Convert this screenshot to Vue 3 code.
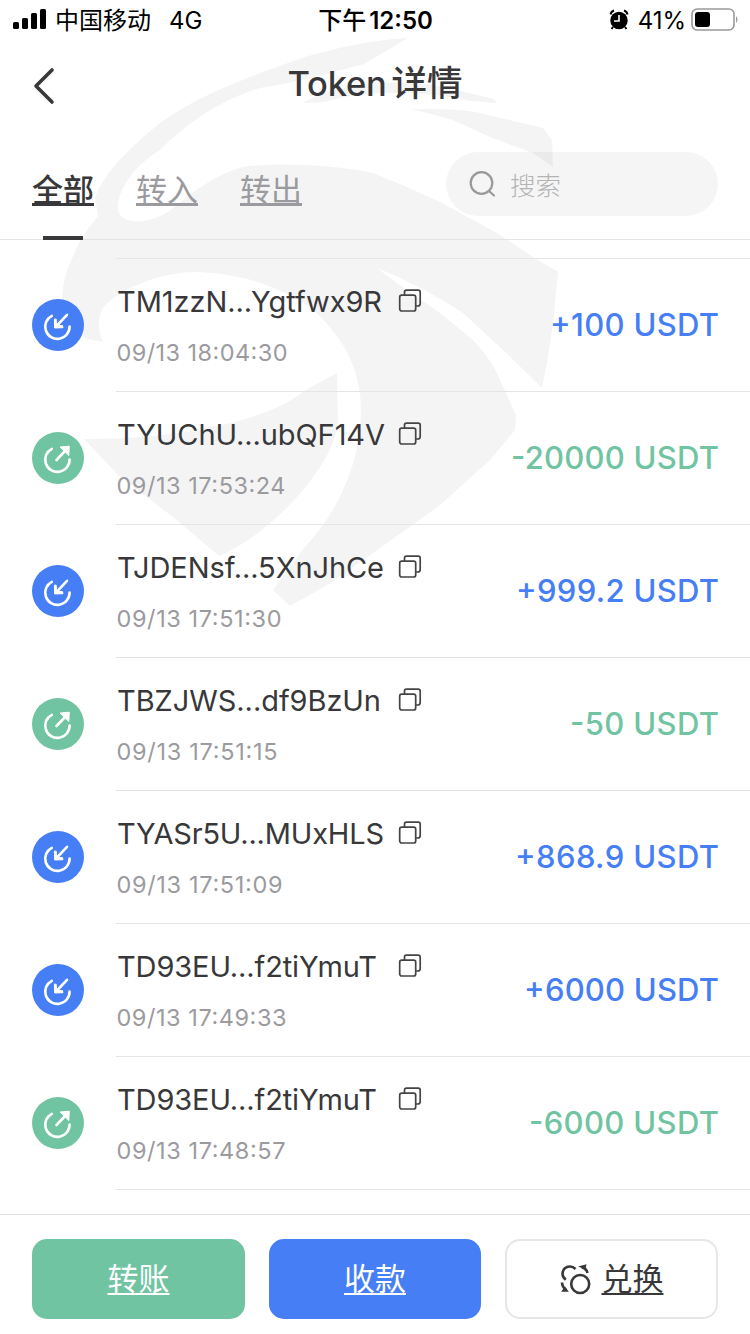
<script setup>
const tabs = [
  { label: '全部', active: true },
  { label: '转入', active: false },
  { label: '转出', active: false },
]
const rows = [
  { addr: 'TM1zzN...Ygtfwx9R', w: 265, time: '09/13 18:04:30', tw: 170, amount: '+100 USDT', aw: 167, incoming: true },
  { addr: 'TYUChU...ubQF14V', w: 268, time: '09/13 17:53:24', tw: 168, amount: '-20000 USDT', aw: 206, incoming: false },
  { addr: 'TJDENsf...5XnJhCe', w: 267, time: '09/13 17:51:30', tw: 164, amount: '+999.2 USDT', aw: 201, incoming: true },
  { addr: 'TBZJWS...df9BzUn', w: 264, time: '09/13 17:51:15', tw: 160, amount: '-50 USDT', aw: 147, incoming: false },
  { addr: 'TYASr5U...MUxHLS', w: 267, time: '09/13 17:51:09', tw: 165, amount: '+868.9 USDT', aw: 202, incoming: true },
  { addr: 'TD93EU...f2tiYmuT', w: 260, time: '09/13 17:49:33', tw: 169, amount: '+6000 USDT', aw: 193, incoming: true },
  { addr: 'TD93EU...f2tiYmuT', w: 260, time: '09/13 17:48:57', tw: 168, amount: '-6000 USDT', aw: 188, incoming: false },
]
</script>

<template>
  <div class="screen">
    <svg class="watermark" viewBox="0 0 750 640" width="750" height="640">
      <path d="M408 38C370 40 320 50 277 67C230 84 195 98 160 123C130 147 105 172 95 197L98 217C92 222 80 240 75 252C66 270 62 285 62 303L84 338L103 342C97 330 98 318 103 308C115 293 150 274 193 272C245 273 280 288 310 307C348 340 361 375 361 410C360 475 330 520 304 548L273 590L290 606L331 583L439 506L490 460L515 430L516 415L497 373Q489 357 473 340L440 313L397 283L377 268Q420 285 463 313L503 350L542 388L548 357L553 323L558 272L533 257L497 233L440 202L407 187L373 173C335 165 280 162 243 167C215 175 195 190 172 209C155 222 125 228 118 211C116 190 135 165 160 150C190 120 225 98 260 88C310 80 340 70 364 64Z" />
      <path d="M412 109C440 109 465 109 480 113L543 128L552 140L553 167L533 153L490 137L453 120Z" />
      <path d="M303 103C335 84 395 78 440 86L494 99L497 103L470 101C430 92 370 88 325 102Z" />
      <path d="M337 373L338 426C330 470 270 535 219 556L178 521L118 475L84 439C180 440 270 420 304 391Z" />
    </svg>

    <header class="status">
      <div class="carrier">
        <svg width="34" height="22" viewBox="0 0 34 22"><rect y="13" width="6" height="7" rx="1.5" /><rect x="9" y="9" width="6" height="11" rx="1.5" /><rect x="18" y="4" width="6" height="16" rx="1.5" /><rect x="27" width="6" height="20" rx="1.5" /></svg>
        <span>中国移动</span><span class="net">4G</span>
      </div>
      <div class="clock"><span>下午</span><b>12:50</b></div>
      <div class="power">
        <svg width="20" height="22" viewBox="0 0 20 22"><circle cx="10" cy="11.5" r="8.7" /><path d="M1.5 5.5Q2 2.5 5 1.5M18.5 5.5Q18 2.5 15 1.5M4 18L2.5 20M16 18L17.5 20" fill="none" stroke="#000" stroke-width="2" /><path d="M10 6V12H5" fill="none" stroke="#fff" stroke-width="1.6" /></svg>
        <span>41%</span>
        <svg class="battery" width="48" height="24" viewBox="0 0 48 24"><rect x="1" y="1" width="42" height="21" rx="5" fill="none" stroke="#999" stroke-width="1.6" /><rect x="4" y="4" width="15" height="15" rx="3" /><path d="M45 8Q48 11.5 45 15Z" fill="#999" /></svg>
      </div>
    </header>

    <nav class="title-bar">
      <svg class="back" width="24" height="40" viewBox="0 0 24 40"><path d="M20 4L4 20L20 36" /></svg>
      <h1><span>Token</span>详情</h1>
    </nav>

    <section class="filters">
      <a v-for="t in tabs" :key="t.label" :class="['tab', { active: t.active }]">{{ t.label }}</a>
      <label class="search">
        <svg width="28" height="28" viewBox="0 0 28 28"><circle cx="12.5" cy="13" r="10.8" /><path d="M20 21L25 25.5" /></svg>
        <span>搜索</span>
      </label>
    </section>

    <main class="list">
      <article v-for="(r, i) in rows" :key="i" class="row">
        <div :class="['badge', r.incoming ? 'in' : 'out']">
          <svg width="52" height="52" viewBox="0 0 52 52">
            <path d="M19.8 16.8A12.2 12.2 0 1 0 37.6 27.5" />
            <path v-if="r.incoming" d="M35 15.8L25 26.5" /><path v-else d="M24.5 28L34 18" />
            <path v-if="r.incoming" class="solid" d="M22.4 20.5L22.6 29L31 28.7L30.5 26.6L26.3 26.6L24.5 24.8L24.2 20.5Z" /><path v-else class="solid" d="M28.5 15L37.3 14.2L36.8 23.2Z" />
          </svg>
        </div>
        <div class="body">
          <div class="info">
            <div class="addr">
              <svg class="text" width="268" height="40"><text x="1" y="28" :textLength="r.w">{{ r.addr }}</text></svg>
              <svg class="copy" width="24" height="24" viewBox="0 0 24 24"><rect x="1.7" y="6.2" width="16" height="15.8" rx="2" /><path d="M6.5 6V3.2Q6.5 1.2 8.5 1.2H20.2Q22.2 1.2 22.2 3.2V14.5Q22.2 17 19.7 17H18" /></svg>
            </div>
            <svg class="time" width="190" height="30"><text x="0.5" y="22" :textLength="r.tw + 1">{{ r.time }}</text></svg>
          </div>
          <svg :class="['amount', r.incoming ? 'in' : 'out']" width="220" height="44"><text :x="219 - r.aw" y="34" :textLength="r.aw + 2">{{ r.amount }}</text></svg>
        </div>
      </article>
    </main>

    <footer class="actions">
      <button class="send"><u>转账</u></button>
      <button class="receive"><u>收款</u></button>
      <button class="swap">
        <svg width="32" height="32" viewBox="0 0 32 32"><circle cx="20.2" cy="21" r="9" /><path d="M5.8 16.8C0 12 2.5 4 9.5 3.5Q13 3.3 15.5 6M21.5 4Q26.5 5.5 27.5 10M2 19.5Q2.2 24 6 27" /><path class="solid" d="M18 3.5L26.5 1.3L25.5 6.3ZM1.2 28.8H8.8L5 23.5Z" /></svg>
        <u>兑换</u>
      </button>
    </footer>
  </div>
</template>

<style>
html, body { background: #fff; overflow: hidden; }
</style>

<style scoped>
* { box-sizing: border-box; }
.screen { position: relative; width: 750px; height: 1334px; overflow: hidden; display: flex; flex-direction: column; background: #fff; color: #38383a; font-family: Inter, "Noto Sans CJK SC", sans-serif; }
.screen > * { position: relative; flex-shrink: 0; }
.screen > .watermark { position: absolute; left: 0; top: 0; fill: #f4f4f4; }
svg { display: block; flex-shrink: 0; }
.status { height: 40px; display: grid; grid-template-columns: 1fr auto 1fr; align-items: center; padding: 0 11px 0 13px; font-size: 24px; color: #000; line-height: 40px; }
.carrier, .clock, .power { display: flex; align-items: center; white-space: nowrap; }
.status span, .status b { padding-top: 2px; line-height: 38px; }
.carrier span { margin-left: 8px; }
.carrier .net { margin-left: 18px; }
.clock { font-weight: 500; margin-left: -1px; }
.clock b { font-weight: 600; margin-left: 3px; }
.power { justify-content: flex-end; }
.power span { margin: 0 5px 0 9px; }
.title-bar { height: 92px; display: flex; justify-content: center; }
.back { position: absolute; left: 32px; top: 26px; fill: none; stroke: #38383a; stroke-width: 3.6; stroke-linecap: round; stroke-linejoin: round; }
h1 { display: flex; align-items: baseline; margin: 19px 0 0; font-size: 35.5px; line-height: 50px; font-weight: 500; }
h1 span { margin-right: 5px; font-size: 34.5px; letter-spacing: -.2px; }
.filters { height: 108px; border-bottom: 1px solid #e3e3e4; display: flex; padding-left: 32px; }
.tab { position: relative; width: 62px; margin-right: 42px; padding-top: 34px; font-size: 31px; line-height: 48px; color: #9b9b9f; font-weight: 400; text-decoration: underline; text-decoration-thickness: 3px; text-underline-offset: 2px; text-decoration-skip-ink: none; }
.tab.active { color: #38383a; font-weight: 500; }
.tab.active::after { content: ""; position: absolute; left: 11px; bottom: -1px; width: 40px; height: 4px; background: #38383a; }
.search { width: 272px; height: 64px; margin: 20px 32px 0 auto; border-radius: 32px; background: rgba(0, 0, 0, .04); display: flex; align-items: center; padding-left: 23px; font-size: 25.5px; color: #b4b4b4; font-weight: 300; }
.search span { padding-bottom: 2px; }
.search svg { margin-right: 13px; fill: none; stroke: #999; stroke-width: 2.2; stroke-linecap: round; }
.list { height: 974px; padding-top: 18px; }
.row { display: flex; height: 133px; padding-left: 32px; align-items: center; }
.badge { width: 52px; height: 52px; border-radius: 50%; margin-right: 32px; }
.badge.in { background: #457ef5; }
.badge.out { background: #70c4a2; }
.badge svg { fill: none; stroke: #fff; stroke-width: 2.6; stroke-linecap: round; }
.badge .solid { fill: #fff; stroke-width: 1; stroke-linejoin: round; }
.body { flex: 1; height: 133px; display: flex; justify-content: space-between; padding-right: 32px; border-top: 1px solid #e5e5e6; }
.row:last-child { height: 134px; }
.row:last-child .body { height: 134px; border-bottom: 1px solid #e5e5e6; }
.info { padding-top: 25px; }
.addr { display: flex; height: 50px; }
.text { font-size: 29px; fill: #38383a; overflow: visible; }
.copy { margin: 5px 0 0 14px; fill: none; stroke: #444; stroke-width: 1.7; }
.time { font-size: 23.5px; fill: #9b9b9f; margin-top: 5px; overflow: visible; }
.amount { margin-top: 43px; font-size: 31px; font-weight: 500; overflow: visible; }
.amount.in { fill: #457ef5; }
.amount.out { fill: #70c4a2; }
.actions { height: 120px; border-top: 1px solid #e3e3e4; display: grid; grid-template-columns: 213px 212px 213px; column-gap: 24px; padding: 24px 32px 15px; }
button { height: 80px; border: 0; border-radius: 15px; color: #fff; font: 400 31px/48px Inter, "Noto Sans CJK SC", sans-serif; display: flex; align-items: center; justify-content: center; padding: 0; }
u { text-decoration-thickness: 2px; text-underline-offset: 3px; text-decoration-skip-ink: none; }
.send { background: #70c4a2; }
.receive { background: #457ef5; }
.swap { background: #fff; border: 2px solid #e7e7e8; color: #38383a; }
.swap svg { margin-right: 10px; fill: none; stroke: #38383a; stroke-width: 2.6; }
.swap .solid { fill: #38383a; stroke: none; }
</style>
